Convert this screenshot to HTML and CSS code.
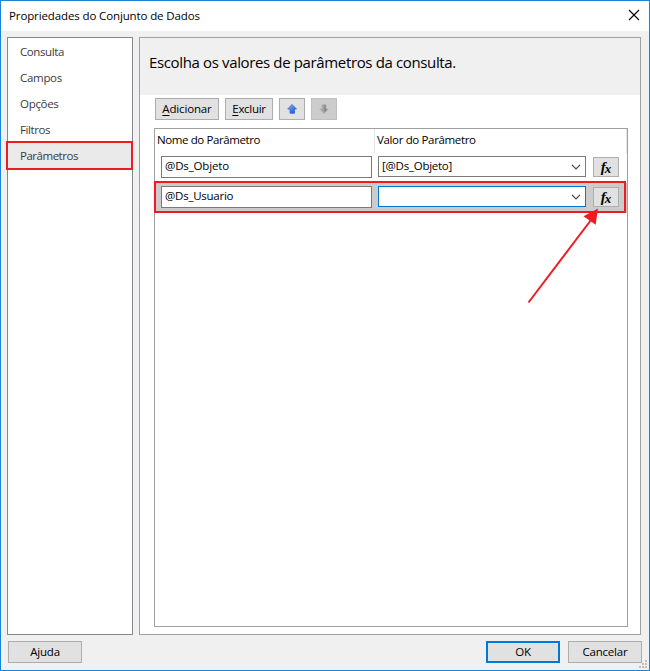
FILE: index.html
```html
<!DOCTYPE html>
<html lang="pt-BR">
<head>
<meta charset="utf-8">
<title>Propriedades do Conjunto de Dados</title>
<link rel="stylesheet" href="styles.css">
</head>
<body>
<div class="window">
  <header class="titlebar">
    <span class="title">Propriedades do Conjunto de Dados</span>
    <svg class="close" width="12" height="12" viewBox="0 0 12 12"><path d="M1 1L11 11M11 1L1 11" stroke="#000" stroke-width="1.15" fill="none"/></svg>
  </header>
  <div class="body">
    <nav class="sidebar">
      <div class="item"><span class="t-consulta">Consulta</span></div>
      <div class="item"><span class="t-campos">Campos</span></div>
      <div class="item"><span class="t-opcoes">Opções</span></div>
      <div class="item"><span class="t-filtros">Filtros</span></div>
      <div class="item selected"><span class="t-param">Parâmetros</span></div>
    </nav>
    <main class="panel">
      <h1 class="heading"><span>Escolha os valores de parâmetros da consulta.</span></h1>
      <div class="content">
        <div class="toolbar">
          <button class="btn add"><span><u>A</u>dicionar</span></button>
          <button class="btn del"><span><u>E</u>xcluir</span></button>
          <button class="btn icon"><svg width="10" height="10" viewBox="0 0 10 10"><defs><linearGradient id="up" x2="1" y2="1"><stop offset="0" stop-color="#8ab8ff"/><stop offset=".5" stop-color="#477fee"/><stop offset="1" stop-color="#1748b8"/></linearGradient></defs><path d="M5 .5L9.5 5H7.5V9.3H3V5H.7Z" fill="url(#up)" stroke="#2c5fce" stroke-width=".7"/></svg></button>
          <button class="btn icon disabled"><svg width="10" height="10" viewBox="0 0 10 10"><path d="M3 .7H7V5H9.3L5 9.5L.7 5H3Z" fill="#a2a2a2" stroke="#b0b0b0" stroke-width=".8"/><path d="M5.5 1V8.5L8.5 5.3H6.7V1Z" fill="#808080"/></svg></button>
        </div>
        <div class="table">
          <div class="thead"><div class="th name"><span>Nome do Parâmetro</span></div><div class="th value"><span>Valor do Parâmetro</span></div></div>
          <div class="row">
            <div class="field"><span class="t-obj">@Ds_Objeto</span></div>
            <div class="combo"><span class="t-val">[@Ds_Objeto]</span><svg width="10" height="6" viewBox="0 0 10 6"><path d="M1 .8L5 4.8L9 .8" fill="none" stroke="#444" stroke-width="1.2"/></svg></div>
            <button class="btn fx"><i class="f">f</i><i class="x">x</i></button>
          </div>
          <div class="row active">
            <div class="field"><span class="t-usr">@Ds_Usuario</span></div>
            <div class="combo focus"><span></span><svg width="10" height="6" viewBox="0 0 10 6"><path d="M1 .8L5 4.8L9 .8" fill="none" stroke="#444" stroke-width="1.2"/></svg></div>
            <button class="btn fx"><i class="f">f</i><i class="x">x</i></button>
          </div>
        </div>
      </div>
    </main>
  </div>
  <footer class="footer">
    <button class="btn help"><span>Ajuda</span></button>
    <button class="btn ok"><span>OK</span></button>
    <button class="btn cancel"><span>Cancelar</span></button>
  </footer>
  <svg class="grip" width="8" height="8" viewBox="0 0 8 8"><path d="M6 0h2v2H6zM3 3h2v2H3zM6 3h2v2H6zM0 6h2v2H0zM3 6h2v2H3zM6 6h2v2H6z" fill="#bfbfbf"/></svg>
  <div class="mark mark-nav"></div>
  <div class="mark mark-row"></div>
  <svg class="arrow" width="76" height="100" viewBox="0 0 76 100"><path d="M2.5 96.5L65 14" stroke="#ed1c24" stroke-width="2"/><path d="M72 2.5L57.5 10.2L69.7 18.7Z" fill="#ed1c24"/></svg>
</div>
</body>
</html>
```
FILE: styles.css
```css
* { box-sizing: border-box; }
body { margin: 0; font-family: "Open Sans", "Noto Sans", sans-serif; font-size: 11.5px; color: #000; }
.window { position: relative; width: 650px; height: 671px; border: 1px solid #1883d7; background: #f0f0f0; display: flex; flex-direction: column; overflow: hidden; }
span { white-space: nowrap; }
.titlebar { height: 30px; background: #fff; display: flex; align-items: center; justify-content: space-between; padding: 0 9px 0 8px; }
.title { letter-spacing: -.12px; margin-top: -2px; }
.close { margin-top: -2px; }
.body { display: flex; gap: 6px; padding: 6px 8px 0 6px; height: 604px; }
.sidebar { width: 126px; height: 598px; border: 1px solid #828790; background: #fff; padding-top: 1px; }
.item { height: 26px; line-height: 26px; padding-left: 12px; color: #3b3b3b; }
.item.selected { background: #eaeaea; }
.t-consulta, .t-filtros { letter-spacing: -.4px; }
.t-campos, .t-opcoes { letter-spacing: -.3px; }
.t-param { letter-spacing: -.48px; }
.panel { width: 502px; height: 598px; border: 1px solid #a0a0a0; background: #fff; }
.heading { margin: 0; height: 57px; background: #f0f0f0; font-size: 15px; font-weight: 400; line-height: 48px; padding-left: 9px; letter-spacing: -.36px; }
.content { padding: 3px 11px 0 14px; }
.toolbar { display: flex; gap: 6px; padding-left: 1px; }
.btn { font: inherit; color: #000; background: #e1e1e1; border: 1px solid #adadad; border-radius: 0; height: 22px; padding: 0 0 1px; display: flex; align-items: center; justify-content: center; }
.btn u { text-underline-offset: 2px; }
.add { width: 64px; letter-spacing: -.15px; }
.del { width: 48px; letter-spacing: -.3px; }
.icon { width: 26px; padding: 0; }
.disabled { background: #ccc; border-color: #bfbfbf; }
.table { margin-top: 8px; width: 474px; height: 499px; border: 1px solid #a0a0a0; }
.thead { display: flex; height: 24px; line-height: 22px; letter-spacing: -.4px; }
.th.name { width: 220px; border-right: 1px solid #e5e5e5; padding-left: 2px; }
.th.value { width: 252px; border-right: 1px solid #e5e5e5; padding-left: 2px; letter-spacing: -.35px; }
.row { height: 30px; display: flex; padding: 3px 0 0 6px; }
.row.active { background: #ccc; }
.field { width: 211px; height: 22px; border: 1px solid #7a7a7a; background: #fff; line-height: 18px; padding-left: 3px; }
.t-obj { letter-spacing: -.15px; }
.t-val, .t-usr { letter-spacing: -.25px; }
.combo { width: 208px; height: 21px; margin-left: 6px; border: 1px solid #7a7a7a; background: #fff; line-height: 19px; padding: 0 4px 0 3px; display: flex; justify-content: space-between; align-items: center; }
.combo span { margin-top: -2px; }
.combo.focus { border-color: #0078d7; }
.btn.fx { margin: 1px 0 0 7px; width: 26px; height: 20px; padding: 0; font-family: "Liberation Serif", serif; font-weight: 700; line-height: 16px; }
.f { font-size: 15px; }
.x { font-size: 13px; margin: 3px 0 0 -1px; }
.footer { display: flex; padding: 6px 7px 0 7px; }
.help, .ok, .cancel { width: 74px; letter-spacing: -.2px; }
.ok { margin-left: auto; margin-right: 8px; border: 2px solid #0078d7; }
.grip { position: absolute; right: 2px; bottom: 2px; }
.mark { position: absolute; border: 2px solid #ed1c24; }
.mark-nav { left: 5px; top: 140px; width: 127px; height: 29px; }
.mark-row { left: 153px; top: 180px; width: 472px; height: 32px; }
.arrow { position: absolute; left: 525px; top: 205px; }
```
